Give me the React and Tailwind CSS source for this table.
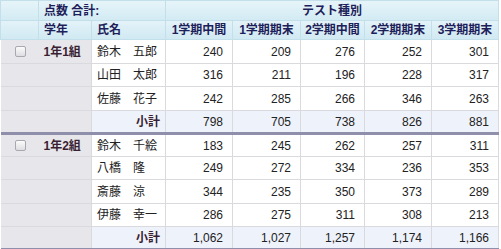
import React from "react";

const groups = [
  {
    name: "1年1組",
    rows: [
      ["鈴木　五郎", 240, 209, 276, 252, 301],
      ["山田　太郎", 316, 211, 196, 228, 317],
      ["佐藤　花子", 242, 285, 266, 346, 263],
    ],
    total: ["798", "705", "738", "826", "881"],
    heights: ["h-[24px]", "h-[23px]", "h-[24px]", "h-[23px]"],
  },
  {
    name: "1年2組",
    rows: [
      ["鈴木　千絵", 183, 245, 262, 257, 311],
      ["八橋　隆", 249, 272, 334, 236, 353],
      ["斎藤　涼", 344, 235, 350, 373, 289],
      ["伊藤　幸一", 286, 275, 311, 308, 213],
    ],
    total: ["1,062", "1,027", "1,257", "1,174", "1,166"],
    heights: ["h-[23px]", "h-[23px]", "h-[24px]", "h-[23px]", "h-[23px]"],
  },
];

const heads = ["1学期中間", "1学期期末", "2学期中間", "2学期期末", "3学期期末"];

function Check() {
  return (
    <div className="w-[11px] h-[11px] rounded-[2px] border border-[#a8a8ae] bg-gradient-to-b from-[#fbfbfb] to-[#dedee2]" />
  );
}

export default function App() {
  return (
    <div
      className="w-[501px] h-[249px] bg-white overflow-hidden text-[12px] text-[#222]"
      style={{ fontFamily: '"Liberation Sans", "Noto Sans CJK JP", sans-serif' }}
    >
      <table className="border-collapse table-fixed w-[498px]">
        <colgroup>
          <col className="w-[38px]" />
          <col className="w-[53px]" />
          <col className="w-[74px]" />
          <col className="w-[67px]" />
          <col className="w-[68px]" />
          <col className="w-[64px]" />
          <col className="w-[67px]" />
          <col className="w-[67px]" />
        </colgroup>
        <thead>
          <tr className="h-[20px] bg-gradient-to-b from-[#e6f4f9] to-[#d2eaf3] font-bold text-[#1e1e5a]">
            <th className="p-0 border border-[#c3dfea]" />
            <th colSpan={2} className="p-0 pl-[5px] text-left border border-[#c3dfea] leading-none">
              点数 合計:
            </th>
            <th colSpan={5} className="p-0 text-center border border-[#c3dfea] leading-none">
              テスト種別
            </th>
          </tr>
          <tr className="h-[19px] bg-gradient-to-b from-[#e3f2f8] to-[#d0e9f2] font-bold text-[#1e1e5a]">
            <th className="p-0 border border-[#c3dfea]" />
            <th className="p-0 pl-[5px] text-left border border-[#c3dfea] leading-none">学年</th>
            <th className="p-0 pl-[5px] text-left border border-[#c3dfea] leading-none">氏名</th>
            {heads.map((h) => (
              <th key={h} className="p-0 text-center border border-[#c3dfea] leading-none">
                {h}
              </th>
            ))}
          </tr>
        </thead>
        {groups.map((g, gi) => (
          <tbody key={g.name} className={gi === 1 ? "border-t-[3px] border-[#8f8fab]" : ""}>
            {g.rows.map((r, ri) => (
              <tr key={ri} className={g.heights[ri]}>
                <td className="p-0 bg-[#e7e7eb] border-b border-[#d9d9de]">
                  {ri === 0 && (
                    <div className="flex justify-center pl-[1px]">
                      <Check />
                    </div>
                  )}
                </td>
                <td className="p-0 pl-[5px] bg-[#e7e7eb] border-b border-r border-[#d9d9de] font-bold text-[#3a1f33] leading-none">
                  {ri === 0 ? g.name : ""}
                </td>
                <td className="p-0 pl-[5px] border border-[#d9d9de] leading-none whitespace-nowrap">
                  {r[0]}
                </td>
                {r.slice(1).map((v, vi) => (
                  <td key={vi} className="p-0 pr-[9px] text-right border border-[#d9d9de] leading-none">
                    {v}
                  </td>
                ))}
              </tr>
            ))}
            <tr className={g.heights[g.rows.length] + (gi === 1 ? " border-b-[3px] border-[#8f8fab]" : "")}>
              <td className="p-0 bg-[#e7e7eb] border-b border-[#d9d9de]" />
              <td className="p-0 bg-[#e7e7eb] border-b border-r border-[#d9d9de]" />
              <td className="p-0 pr-[5px] text-right bg-[#eef2fb] border border-[#d9d9de] font-bold text-[#3a1f33] leading-none">
                小計
              </td>
              {g.total.map((v, vi) => (
                <td key={vi} className="p-0 pr-[9px] text-right bg-[#eef2fb] border border-[#d9d9de] leading-none">
                  {v}
                </td>
              ))}
            </tr>
          </tbody>
        ))}
      </table>
    </div>
  );
}
